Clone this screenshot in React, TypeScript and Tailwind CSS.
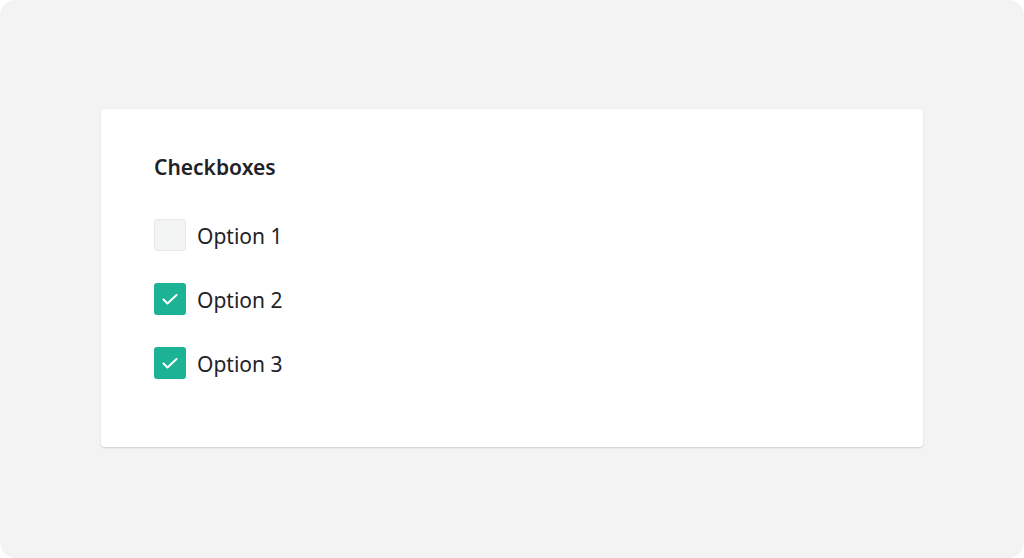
import { useState } from 'react';

const initial = [
  { id: 1, label: 'Option 1', checked: false },
  { id: 2, label: 'Option 2', checked: true },
  { id: 3, label: 'Option 3', checked: true },
];

export default function App() {
  const [options, setOptions] = useState(initial);

  const toggle = (id: number) => {
    setOptions((prev) => prev.map((o) => (o.id === id ? { ...o, checked: !o.checked } : o)));
  };

  return (
    <div className="bg-white">
      <div
        className="h-[558px] w-full rounded-[16px] bg-[#f3f3f3] flex justify-center pt-[109px]"
        style={{ fontFamily: '"Noto Sans", "Open Sans", sans-serif' }}
      >
        <div className="w-[822px] h-[338px] bg-white rounded-[4px] shadow-[0_1px_2px_rgba(0,0,0,0.15)] pl-[53px] pt-[44px]">
          <h2 className="text-[21px] leading-[28px] font-semibold text-[#1f2328]">Checkboxes</h2>
          <div className="mt-[37px] flex flex-col gap-[30px]">
            {options.map((o) => (
              <label key={o.id} className="flex items-center gap-[11px] cursor-pointer">
                <button
                  type="button"
                  onClick={() => toggle(o.id)}
                  className={
                    o.checked
                      ? 'w-[32px] h-[32px] rounded-[3px] bg-[#1cb394] flex items-center justify-center'
                      : 'w-[32px] h-[32px] rounded-[3px] bg-[#f3f4f4] border border-[#e6e8e8]'
                  }
                >
                  {o.checked && (
                    <svg width="24" height="24" viewBox="0 0 24 24" fill="none" stroke="white" strokeWidth={2} strokeLinecap="round" strokeLinejoin="round">
                      <path d="M5.5 12.5l4 4L18.5 8" />
                    </svg>
                  )}
                </button>
                <span className="pt-[2px] text-[21px] leading-[32px] text-[#1f2328]">{o.label}</span>
              </label>
            ))}
          </div>
        </div>
      </div>
    </div>
  );
}
